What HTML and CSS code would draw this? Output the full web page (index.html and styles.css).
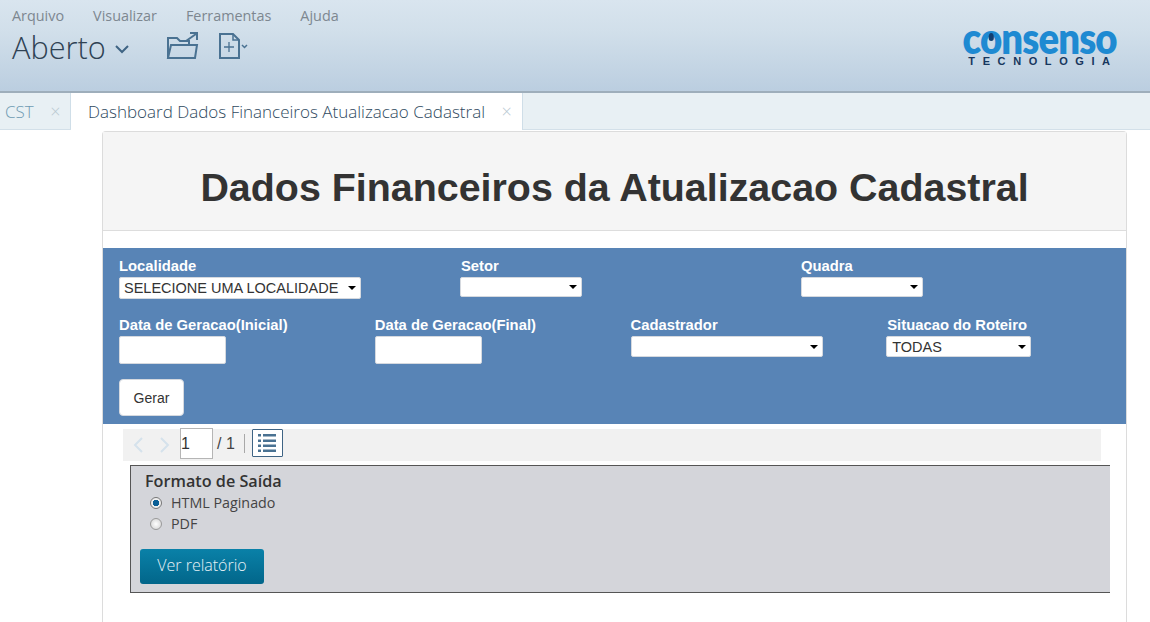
FILE: index.html
```html
<!DOCTYPE html>
<html lang="pt">
<head>
<meta charset="utf-8">
<title>Dashboard Dados Financeiros Atualizacao Cadastral</title>
<link rel="stylesheet" href="styles.css">
</head>
<body>
<header class="topbar">
  <div class="topbar-left">
    <nav class="menu">
      <span>Arquivo</span><span>Visualizar</span><span>Ferramentas</span><span>Ajuda</span>
    </nav>
    <div class="actions">
      <div class="mode">Aberto
        <svg class="mode-caret" width="16" height="10" viewBox="0 0 16 10"><path d="M2 2l6 6 6-6" fill="none" stroke="#3f6484" stroke-width="2"/></svg>
      </div>
      <svg class="icon-folder" width="34" height="30" viewBox="0 0 34 30" fill="none" stroke="#4a7292" stroke-width="2">
        <path d="M2 27V7h9l3 3h9v4"/>
        <path d="M2 27l3-13h26l-2 13z"/>
        <path d="M20 10l10-7M24 2h7v7"/>
      </svg>
      <svg class="icon-new" width="32" height="28" viewBox="0 0 32 28" fill="none" stroke="#4a7292" stroke-width="2">
        <path d="M2 2h13l6 6v18H2z"/>
        <path d="M15 2v6h6" stroke-width="1.5"/>
        <path d="M6 15h10M11 10v10" stroke-width="1.300"/>
        <path d="M24 13l2.500 2.500L29 13" stroke-width="1.500"/>
      </svg>
    </div>
  </div>
  <div class="logo">
    <div class="logo-main">c<span class="logo-o">o</span>nsenso</div>
    <div class="logo-sub">TECNOLOGIA</div>
  </div>
</header>
<div class="tabs">
  <div class="tab">CST <span class="tab-x">×</span></div>
  <div class="tab tab-active">Dashboard Dados Financeiros Atualizacao Cadastral <span class="tab-x">×</span></div>
</div>
<main class="card">
  <div class="card-head"><h1>Dados Financeiros da Atualizacao Cadastral</h1></div>
  <form class="filters">
    <div class="row row-3">
      <div class="field"><label>Localidade</label><select class="sel sel-loc"><option>SELECIONE UMA LOCALIDADE</option></select></div>
      <div class="field"><label class="nudge">Setor</label><select class="sel sel-small"><option></option></select></div>
      <div class="field"><label>Quadra</label><select class="sel sel-small"><option></option></select></div>
    </div>
    <div class="row row-4">
      <div class="field"><label>Data de Geracao(Inicial)</label><input class="date" type="text"></div>
      <div class="field"><label>Data de Geracao(Final)</label><input class="date" type="text"></div>
      <div class="field"><label>Cadastrador</label><select class="sel sel-cad"><option></option></select></div>
      <div class="field"><label class="nudge">Situacao do Roteiro</label><select class="sel sel-sit"><option>TODAS</option></select></div>
    </div>
    <button class="gerar" type="button">Gerar</button>
  </form>
  <div class="pager">
    <svg class="chev" width="12" height="18" viewBox="0 0 12 18"><path d="M10 2L3 9l7 7" fill="none" stroke="#d5e2ec" stroke-width="2"/></svg>
    <svg class="chev" width="12" height="18" viewBox="0 0 12 18"><path d="M2 2l7 7-7 7" fill="none" stroke="#d5e2ec" stroke-width="2"/></svg>
    <input class="page-input" type="text" value="1">
    <span class="page-total">/ 1</span>
    <span class="page-sep"></span>
    <button class="list-btn" type="button" aria-label="Lista">
      <svg width="18" height="20" viewBox="0 0 18 20" fill="#4a7292"><rect x="0" y="1" width="3" height="2.500"/><rect x="5" y="1" width="13" height="2.500"/><rect x="0" y="6.500" width="3" height="2.500"/><rect x="5" y="6.500" width="13" height="2.500"/><rect x="0" y="11.500" width="3" height="2.500"/><rect x="5" y="11.500" width="13" height="2.500"/><rect x="0" y="16.500" width="3" height="2.500"/><rect x="5" y="16.500" width="13" height="2.500"/></svg>
    </button>
  </div>
  <section class="output">
    <h2>Formato de Saída</h2>
    <label class="radio"><input type="radio" name="fmt" checked>HTML Paginado</label>
    <label class="radio"><input type="radio" name="fmt">PDF</label>
    <button class="ver" type="button">Ver relatório</button>
  </section>
</main>
</body>
</html>
```
FILE: styles.css
```css
* { box-sizing: border-box; }
html, body { margin: 0; height: 622px; overflow: hidden; background: #fff; }
body { display: flex; flex-direction: column; font-family: "Open Sans", sans-serif; }

.topbar {
  height: 93px; flex: none; display: flex; justify-content: space-between;
  background: linear-gradient(#d9e5ef, #d1dfea 35%, #bbcee0);
  border-bottom: 2px solid #9eaebb;
}
.topbar-left { padding: 7px 0 0 12px; }
.menu { display: flex; gap: 29px; font-size: 14.4px; line-height: 18px; color: #7d8790; }
.actions { display: flex; align-items: flex-start; margin-top: 2px; }
.mode { display: flex; align-items: center; font-size: 30.700px; font-weight: 300; line-height: 40px; color: #2f4254; width: 155px; }
.mode-caret { margin-left: 8px; margin-top: 3px; }
.icon-folder { margin-top: 4px; margin-left: -1px; }
.icon-new { margin-left: 18px; margin-top: 5px; }

.logo { margin: 19px 32px 0 0; width: 156px; display: flex; flex-direction: column; align-items: center; }
.logo-main { font-family: Lato, sans-serif; font-weight: 800; font-size: 44px; line-height: 36px; letter-spacing: -1px; color: #1e8ad2; transform: scaleX(0.87); white-space: nowrap; }
.logo-o { position: relative; }
.logo-o::after { content: ""; position: absolute; left: 50%; top: 22px; width: 6px; height: 8px; margin-left: -2px; border-radius: 50% 50% 50% 50% / 60% 60% 40% 40%; background: #123f70; }
.logo-sub { font-family: "Liberation Sans", sans-serif; font-weight: 700; font-size: 11px; line-height: 12px; letter-spacing: 7.600px; color: #17375e; margin-left: 6px; margin-top: 0; white-space: nowrap; }

.tabs { height: 37px; flex: none; display: flex; background: #e8f0f4; border-bottom: 1px solid #d3e0e9; font-size: 17px; font-weight: 300; }
.tab { width: 71px; padding-left: 5px; line-height: 37px; color: #6f9bb3; border-right: 1px solid #cfdee8; white-space: nowrap; }
.tab-active { width: 452px; padding-left: 17px; height: 37px; color: #2f4a60; background: #fff; }
.tab-x { color: #b9c8d2; margin-left: 12px; font-size: 18px; }

.card {
  flex: 1; width: 1025px; margin: 1px 0 0 102px;
  border: 1px solid #dcdcdc; border-bottom: 0; border-radius: 4px 4px 0 0;
}
.card-head { height: 99px; padding-top: 12px; background: #f5f5f5; border-bottom: 1px solid #ddd; display: flex; align-items: center; justify-content: center; }
h1 { margin: 0; font: 700 39.400px/42px "Liberation Sans", Arial, sans-serif; color: #333; }

.filters { margin-top: 17px; height: 176px; background: #5884b6; padding-top: 7px; font-family: "Liberation Sans", Arial, sans-serif; }
.row { display: grid; }
.row-3 { grid-template-columns: repeat(3, 1fr); height: 59px; }
.row-4 { grid-template-columns: repeat(4, 1fr); height: 65px; }
.field { padding-left: 16px; display: flex; flex-direction: column; align-items: flex-start; }
.field label { font-size: 14.800px; font-weight: 700; line-height: 22px; color: #fff; }
.field label.nudge { margin-left: 1px; }
.sel {
  appearance: none; border: 1px solid #d5d9df; border-radius: 2px; padding: 0 0 0 4px;
  font: 14.500px "Liberation Sans", Arial, sans-serif; color: #333;
  background: #fff no-repeat;
  height: 20px; margin: 0;
  background-image: url("data:image/svg+xml,%3Csvg xmlns='http://www.w3.org/2000/svg' width='8' height='4'%3E%3Cpath d='M0 0h8L4 4z' fill='%23000'/%3E%3C/svg%3E");
  background-size: 8px 4px; background-position: right 4px center;
}
.sel-loc { width: 242px; height: 22px; }
.sel-small { width: 122px; }
.sel-cad { width: 192px; height: 21px; }
.sel-sit { width: 145px; height: 21px; padding-left: 5px; }
.date { width: 107px; height: 28px; border: 1px solid #d5d9df; border-radius: 2px; background: #fff; }
.gerar {
  display: block; margin-left: 16px; width: 65px; height: 37px; border: 1px solid #d5d9df; border-radius: 4px;
  background: #fff; color: #333; font: 14px "Liberation Sans", Arial, sans-serif;
}

.pager {
  margin: 5px 0 0 20px; width: 978px; height: 32px; background: #f1f1f1;
  display: flex; align-items: center; font-family: "Liberation Sans", Arial, sans-serif; font-size: 16px; color: #444;
}
.chev { margin-left: 9px; margin-right: 15px; }
.chev + .chev { margin-left: 0; margin-right: 9px; }
.page-input { width: 33px; height: 31px; border: 1px solid #b5b5b5; background: #fff; padding: 0; font: 16px "Liberation Sans", Arial, sans-serif; color: #333; margin-top: -3px; }
.page-total { margin-left: 4px; margin-top: -3px; }
.page-sep { width: 1px; height: 19px; margin-left: 9px; background: #a8a8a8; margin-top: -3px; }
.list-btn { width: 31px; height: 28px; margin-left: 7px; margin-top: -4px; padding: 0; border: 1px solid #3f6484; background: #fff; border-radius: 1px; display: flex; align-items: center; justify-content: center; }

.output {
  margin: 4px 16px 0 27px; height: 128px; padding: 5px 0 0 14px;
  background: #d4d5da; border: 1px solid #555; border-right: 0;
}
h2 { margin: 0; font-size: 16.200px; font-weight: 600; line-height: 20px; color: #333; }
.radio { display: flex; align-items: center; height: 21px; margin-top: 0; font-size: 14.300px; color: #444; }
h2 + .radio { margin-top: 1px; }
.radio input {
  appearance: none; width: 12px; height: 12px; margin: 0 9px 0 5px; border-radius: 50%;
  border: 1px solid #9a9a9a; background: radial-gradient(#fff, #d0d0d0);
}
.radio input:checked { background: radial-gradient(circle, #0a5f96 0 3px, #eee 3.500px); border-color: #777; }
.ver {
  display: block; margin: 15px 0 0 -5px; width: 124px; height: 35px; padding: 0 0 4px; border: 0; border-radius: 3px;
  background: linear-gradient(#0a81a8, #02668a); color: #e6f2f6;
  font: 300 16px "Open Sans", sans-serif;
}
```
